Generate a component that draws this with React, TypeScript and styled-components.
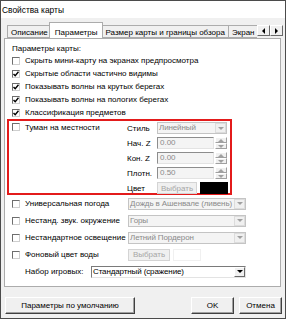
import React from "react";
import styled, { createGlobalStyle } from "styled-components";

const GlobalStyle = createGlobalStyle`
  html, body { margin: 0; padding: 0; background: #ffffff; }
  body {
    font-family: "Liberation Sans", Arial, sans-serif;
    font-size: 8px;
    color: #000;
  }
  * { box-sizing: border-box; }
`;

const Window = styled.div`
  width: 286px;
  height: 319px;
  border: 1px solid #4b4b4b;
  background: #f0f0f0;
  display: flex;
  flex-direction: column;
`;

const TitleBar = styled.div`
  height: 17px;
  background: #fff;
  display: flex;
  align-items: center;
  padding-left: 1px;
  font-size: 8.4px;
`;

const Body = styled.div`
  flex: 1;
  display: flex;
  flex-direction: column;
  padding: 0 4px 0 3px;
`;

const TabRow = styled.div`
  display: flex;
  height: 16px;
  margin-top: 4px;
  margin-right: -2px;
`;

const TabsClip = styled.div`
  flex: 1;
  display: flex;
  align-items: flex-end;
  overflow: hidden;
  padding-left: 3px;
`;

const Tab = styled.div<{ $active?: boolean }>`
  height: ${(p) => (p.$active ? "17px" : "13px")};
  margin: ${(p) => (p.$active ? "0 -2px -1px -2px" : "0 -1px 0 0")};
  padding: ${(p) => (p.$active ? "2px 5px 0 5px" : "1px 3px 0 3px")};
  border: 1px solid #acacac;
  border-bottom: ${(p) => (p.$active ? "none" : "1px solid #acacac")};
  background: ${(p) => (p.$active ? "#fff" : "#f0f0f0")};
  position: relative;
  z-index: ${(p) => (p.$active ? 1 : 0)};
  display: flex;
  align-items: center;
  white-space: nowrap;
`;

const ScrollArrows = styled.div`
  display: flex;
  margin-top: 3px;
  height: 11px;
`;

const ArrowBtn = styled.div`
  width: 13px;
  height: 11px;
  background: #f0f0f0;
  border: 1px solid;
  border-color: #fff #696969 #696969 #fff;
  display: flex;
  align-items: center;
  justify-content: center;
`;

const Panel = styled.div`
  border: 1px solid #acacac;
  background: #fff;
  padding: 3px 0 6px 2px;
  display: flex;
  flex-direction: column;
`;

const Heading = styled.div`
  height: 12px;
  padding-left: 5px;
  display: flex;
  align-items: center;
`;

const CheckRow = styled.div`
  height: 13px;
  padding-left: 5px;
  display: flex;
  align-items: center;
  white-space: nowrap;
`;

const Box = styled.span`
  width: 8px;
  height: 8px;
  flex: none;
  background: #fff;
  border: 1px solid;
  border-color: #6e6e6e #cfcfcf #cfcfcf #6e6e6e;
  display: flex;
  align-items: center;
  justify-content: center;
`;

const CheckLabel = styled.span`
  margin-left: 5px;
`;

const FogBox = styled.div`
  width: 225px;
  height: 76px;
  border: 2px solid #e31b1b;
  display: flex;
`;

const FogLeft = styled.div`
  width: 118px;
  padding: 0 0 0 3px;
  height: 12px;
  display: flex;
  align-items: center;
`;

const FogGrid = styled.div`
  display: grid;
  grid-template-columns: 30px 71px;
  grid-auto-rows: 12px;
  row-gap: 3px;
  padding-top: 1px;
  align-items: center;
`;

const FieldLabel = styled.span`
  white-space: nowrap;
`;

const Combo = styled.div<{ $disabled?: boolean; $w: number }>`
  width: ${(p) => p.$w}px;
  height: 12px;
  display: flex;
  border: 1px solid;
  border-color: ${(p) =>
    p.$disabled ? "#c4c4c4" : "#7a7a7a #e3e3e3 #e3e3e3 #7a7a7a"};
  background: ${(p) => (p.$disabled ? "#f4f4f4" : "#fff")};
  color: ${(p) => (p.$disabled ? "#8a8a8a" : "#000")};
`;

const ComboText = styled.span`
  flex: 1;
  padding-left: 1px;
  white-space: nowrap;
  overflow: hidden;
  line-height: 10px;
  letter-spacing: -0.12px;
`;

const DropBtn = styled.span<{ $disabled?: boolean }>`
  width: 11px;
  flex: none;
  display: flex;
  align-items: center;
  justify-content: center;
  background: #f0f0f0;
  border: 1px solid;
  border-color: ${(p) =>
    p.$disabled ? "#dcdcdc" : "#fff #696969 #696969 #fff"};
`;

const SpinWrap = styled.div`
  display: flex;
  height: 12px;
  gap: 1px;
`;

const Field = styled.div`
  width: 57px;
  height: 12px;
  border: 1px solid;
  border-color: #8d8d8d #e3e3e3 #e3e3e3 #8d8d8d;
  background: #f4f4f4;
  color: #8a8a8a;
  padding-left: 2px;
  line-height: 10px;
`;

const Spin = styled.div`
  width: 12px;
  display: flex;
  flex-direction: column;
`;

const SpinHalf = styled.span`
  flex: 1;
  background: #f0f0f0;
  border: 1px solid;
  border-color: #fff #a0a0a0 #a0a0a0 #fff;
  display: flex;
  align-items: center;
  justify-content: center;
`;

const ColorPick = styled.div`
  display: flex;
  gap: 3px;
  height: 12px;
`;

const PickBtn = styled.div<{ $w: number }>`
  width: ${(p) => p.$w}px;
  height: 12px;
  border: 1px solid #d4d4d4;
  background: #f0f0f0;
  color: #a6a6a6;
  display: flex;
  align-items: center;
  justify-content: center;
`;

const Swatch = styled.div<{ $color: string; $w: number }>`
  width: ${(p) => p.$w}px;
  height: 12px;
  background: ${(p) => p.$color};
  border: 1px solid ${(p) => (p.$color === "#fff" ? "#f0f0f0" : "#000")};
`;

const OptionRow = styled.div<{ $cols: string; $indent: number }>`
  height: 17px;
  display: grid;
  grid-template-columns: ${(p) => p.$cols};
  align-items: center;
  padding-left: ${(p) => p.$indent}px;
`;

const OptionLeft = styled.div`
  display: flex;
  align-items: center;
  white-space: nowrap;
`;

const Footer = styled.div`
  display: flex;
  justify-content: space-between;
  margin-top: 10px;
  padding-left: 1px;
`;

const BtnGroup = styled.div`
  display: flex;
  gap: 5px;
  margin-right: -1px;
`;

const Button = styled.div<{ $w: number }>`
  width: ${(p) => p.$w}px;
  height: 17px;
  background: #f0f0f0;
  border: 1px solid;
  border-color: #fff #404040 #404040 #fff;
  box-shadow: inset -1px -1px 0 #a0a0a0;
  display: flex;
  align-items: center;
  justify-content: center;
`;

const Tick = () => (
  <svg width="6" height="6" viewBox="0 0 6 6">
    <polyline points="0.5,3 2.2,4.8 5.5,0.8" fill="none" stroke="#000" strokeWidth="1.4" />
  </svg>
);

const Arrow = ({ dir, color }: { dir: "down" | "up" | "left" | "right"; color: string }) => {
  const pts = {
    down: "0,0 6,0 3,3",
    up: "0,3 6,3 3,0",
    left: "3,0 3,6 0,3",
    right: "0,0 0,6 3,3",
  }[dir];
  const vertical = dir === "down" || dir === "up";
  return (
    <svg width={vertical ? 6 : 3} height={vertical ? 3 : 6} viewBox={vertical ? "0 0 6 3" : "0 0 3 6"}>
      <polygon points={pts} fill={color} />
    </svg>
  );
};

const CheckBox = ({ checked, label }: { checked?: boolean; label: string }) => (
  <>
    <Box>{checked && <Tick />}</Box>
    <CheckLabel>{label}</CheckLabel>
  </>
);

const SpinField = ({ value }: { value: string }) => (
  <SpinWrap>
    <Field>{value}</Field>
    <Spin>
      <SpinHalf><Arrow dir="up" color="#a0a0a0" /></SpinHalf>
      <SpinHalf><Arrow dir="down" color="#a0a0a0" /></SpinHalf>
    </Spin>
  </SpinWrap>
);

const mapOptions = [
  { label: "Скрыть мини-карту на экранах предпросмотра", checked: false },
  { label: "Скрытые области частично видимы", checked: true },
  { label: "Показывать волны на крутых берегах", checked: true },
  { label: "Показывать волны на пологих берегах", checked: true },
  { label: "Классификация предметов", checked: true },
];

const envOptions = [
  { label: "Универсальная погода", value: "Дождь в Ашенвале (ливень)" },
  { label: "Нестанд. звук. окружение", value: "Горы" },
  { label: "Нестандартное освещение", value: "Летний Пордерон" },
];

export default function App() {
  return (
    <>
      <GlobalStyle />
      <Window>
        <TitleBar>Свойства карты</TitleBar>
        <Body>
          <TabRow>
            <TabsClip>
              <Tab>Описание</Tab>
              <Tab $active>Параметры</Tab>
              <Tab>Размер карты и границы обзора</Tab>
              <Tab>Экран</Tab>
            </TabsClip>
            <ScrollArrows>
              <ArrowBtn><Arrow dir="left" color="#000" /></ArrowBtn>
              <ArrowBtn><Arrow dir="right" color="#000" /></ArrowBtn>
            </ScrollArrows>
          </TabRow>

          <Panel>
            <Heading>Параметры карты:</Heading>
            {mapOptions.map((o) => (
              <CheckRow key={o.label}>
                <CheckBox checked={o.checked} label={o.label} />
              </CheckRow>
            ))}

            <FogBox>
              <FogLeft>
                <CheckBox label="Туман на местности" />
              </FogLeft>
              <FogGrid>
                <FieldLabel>Стиль</FieldLabel>
                <Combo $disabled $w={70}>
                  <ComboText>Линейный</ComboText>
                  <DropBtn $disabled><Arrow dir="down" color="#a0a0a0" /></DropBtn>
                </Combo>
                <FieldLabel>Нач. Z</FieldLabel>
                <SpinField value="0.00" />
                <FieldLabel>Кон. Z</FieldLabel>
                <SpinField value="0.00" />
                <FieldLabel>Плотн.</FieldLabel>
                <SpinField value="0.50" />
                <FieldLabel>Цвет</FieldLabel>
                <ColorPick>
                  <PickBtn $w={40}>Выбрать</PickBtn>
                  <Swatch $color="#000" $w={28} />
                </ColorPick>
              </FogGrid>
            </FogBox>

            {envOptions.map((o) => (
              <OptionRow key={o.label} $cols="116px 118px" $indent={5}>
                <OptionLeft>
                  <CheckBox label={o.label} />
                </OptionLeft>
                <Combo $disabled $w={118}>
                  <ComboText>{o.value}</ComboText>
                  <DropBtn $disabled><Arrow dir="down" color="#a0a0a0" /></DropBtn>
                </Combo>
              </OptionRow>
            ))}

            <OptionRow $cols="116px 118px" $indent={5}>
              <OptionLeft>
                <CheckBox label="Фоновый цвет воды" />
              </OptionLeft>
              <ColorPick>
                <PickBtn $w={42}>Выбрать</PickBtn>
                <Swatch $color="#fff" $w={28} />
              </ColorPick>
            </OptionRow>

            <OptionRow $cols="66px 155px" $indent={18}>
              <span>Набор игровых:</span>
              <Combo $w={155}>
                <ComboText>Стандартный (сражение)</ComboText>
                <DropBtn><Arrow dir="down" color="#000" /></DropBtn>
              </Combo>
            </OptionRow>
          </Panel>

          <Footer>
            <Button $w={130}>Параметры по умолчанию</Button>
            <BtnGroup>
              <Button $w={43}>OK</Button>
              <Button $w={43}>Отмена</Button>
            </BtnGroup>
          </Footer>
        </Body>
      </Window>
    </>
  );
}
